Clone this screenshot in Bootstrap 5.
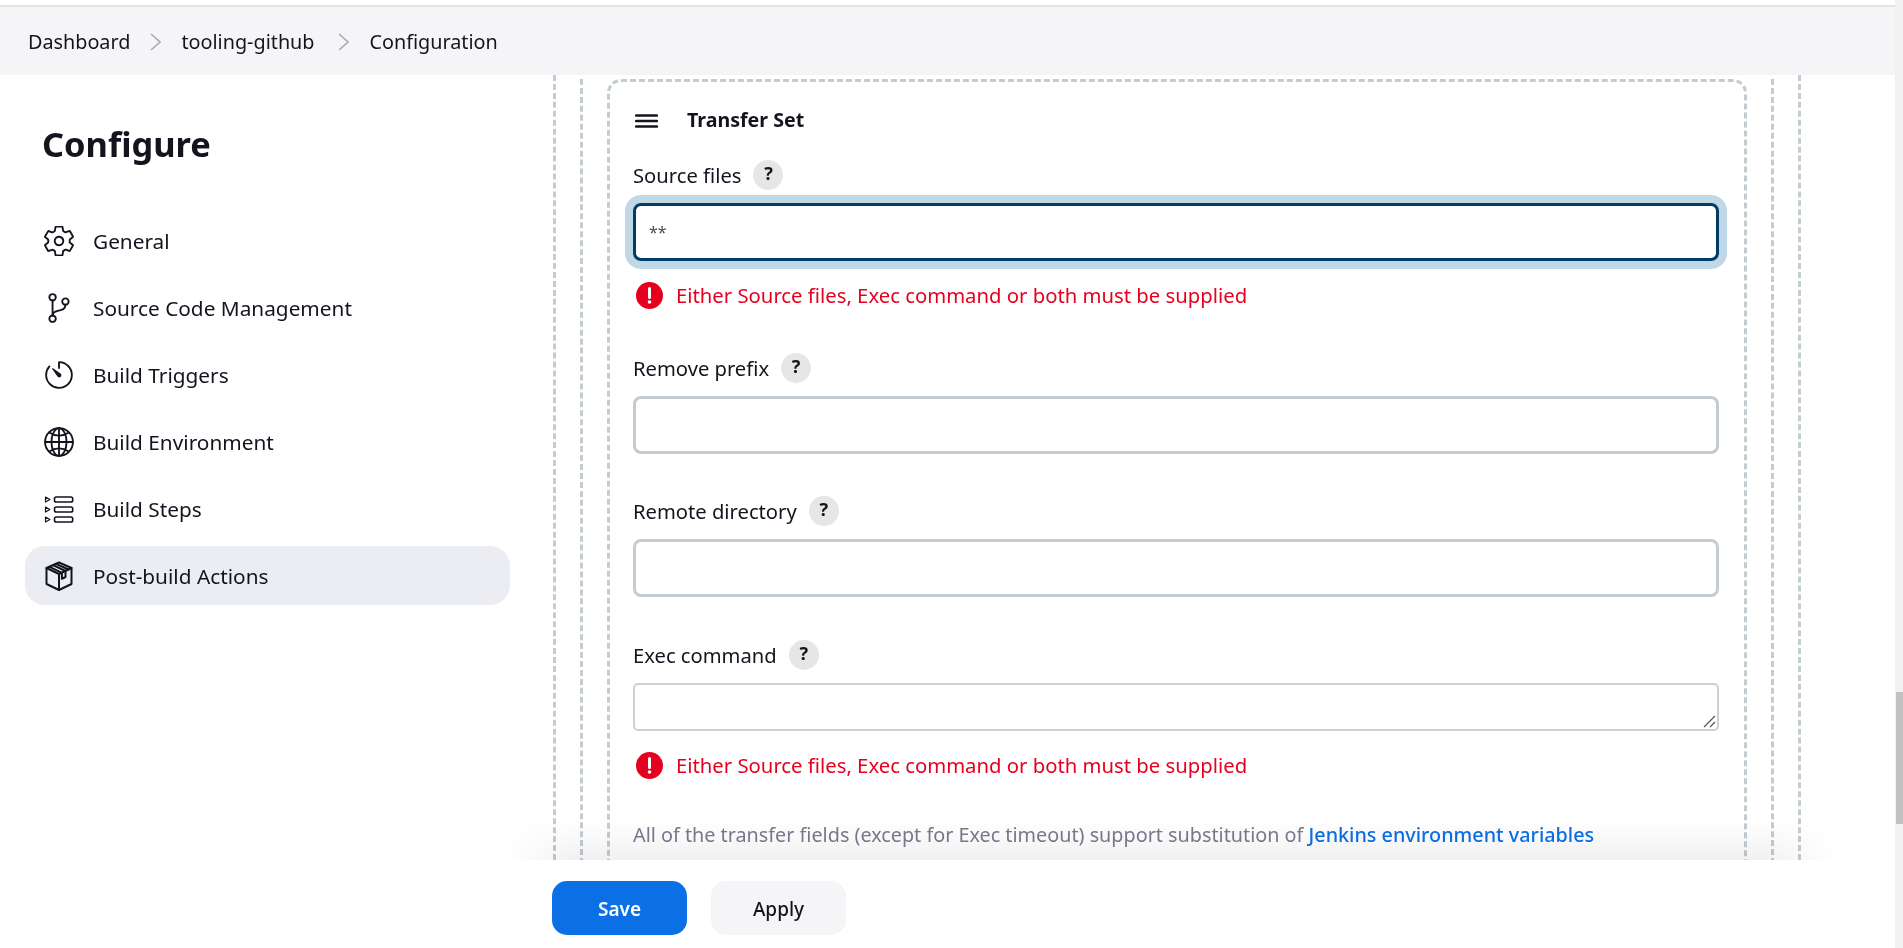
<!DOCTYPE html>
<html lang="en">
<head>
<meta charset="utf-8">
<title>Configuration</title>
<link rel="stylesheet" href="https://cdn.jsdelivr.net/npm/bootstrap@5.3.0/dist/css/bootstrap.min.css">
<style>
html,body{height:948px;overflow:hidden;background:#fff}
body{font-family:"Noto Sans","Open Sans","Liberation Sans",sans-serif;color:#14141f;font-size:20px}
.shell{height:948px}
.pagecol{width:1895px;flex:none}
.fake-scroll{width:8px;background:#f1f1f1;position:relative}
.fake-thumb{position:absolute;left:1px;right:0;top:692px;height:132px;background:#c1c1c1}
.top-strip{height:7px;border-bottom:2px solid #e4e4e0;flex:none}
.crumbs{height:68px;background:#f5f5f8;padding:2px 0 0 28px;flex:none;font-size:19.8px}
.crumbs a{color:#14141f;text-decoration:none}
.crumb-sep{width:11px;height:20px;margin:0 20px;flex:none}
.crumb-sep-b{margin:0 21px 0 23px}
.content{height:785px;overflow:hidden;flex:none}
.side{width:553px;flex:none;padding:0 0 0 25px}
.side-title{font-size:34.4px;font-weight:700;line-height:50px;margin:44px 0 42px 17px}
.side-link{height:59px;width:485px;margin-bottom:8px;padding-left:19px;border-radius:20px;color:#14141f;text-decoration:none;font-size:20.8px}
.side-link svg{width:30px;height:30px;margin-right:19px;flex:none}
.side-text{margin-top:2px}
.side-active{background:#ecedf3}
.rail{border-left:3px dashed #c3ccd1;border-right:3px dashed #c3ccd1;padding:0 24px}
.rail-outer{width:1248px}
.transfer{border:3px dashed #c3ccd1;border-radius:14px;margin-top:4px;padding:23px 25px 0 22px;height:900px}
.handle{width:23px;height:14px;margin:2px 29px 0 3px}
.transfer-title{font-weight:700;font-size:19.6px;line-height:28px;padding-top:1px}
.field-head{height:30px;margin-bottom:13px}
.field-first{margin-top:26px}
.field-label{line-height:30px;margin-bottom:0;font-size:20.2px}
.help-dot{width:30px;height:30px;border-radius:50%;background:#e6e6e6;font-weight:700;font-size:18px;margin-left:12px;line-height:26px;text-align:center}
.field-body{margin-left:1px}
.field-input.form-control{height:58px;border:3px solid #c3ccd1;border-radius:8px;padding:0 13px;font-size:16px;color:#4a4a55;box-shadow:none}
.field-input.is-focus{border-color:#003d66;box-shadow:0 0 0 8px #c0d8e6}
.field-next{margin-top:42px}
.field-exec{margin-top:43px}
.field-area-wrap{height:48px}
.field-area.form-control{height:48px;min-height:48px;border:2px solid #c9d0d6;border-radius:5px;resize:none;box-shadow:none}
.grip{position:absolute;right:3px;bottom:3px;width:13px;height:13px}
.err{color:#e6001f;line-height:27px;margin-top:21px;font-size:20.3px}
.err svg{width:27px;height:27px;margin:0 13px 0 3px;flex:none}
.err + .field-next{margin-top:44px}
.hint{color:#7a7a8e;line-height:30px;margin-top:41px;font-size:19.8px}
.hint a{color:#0b6fe6;text-decoration:none;font-weight:500}
.actionbar{height:88px;background:#fff;position:relative;padding:21px 0 0 552px;flex:none}
.actionbar::before{content:"";position:absolute;left:505px;right:60px;top:-40px;height:40px;background:linear-gradient(to bottom,#fff,#f1f1f3);mix-blend-mode:multiply;-webkit-mask-image:linear-gradient(to right,transparent,#000 70px,#000 calc(100% - 70px),transparent);mask-image:linear-gradient(to right,transparent,#000 70px,#000 calc(100% - 70px),transparent)}
.act-btn.btn{width:135px;height:54px;border-radius:15px;font-size:19px;border:0;margin-right:24px;padding-top:8px}
.act-save.btn{background:#0b6fe6;color:#fff;font-weight:600}
.act-apply.btn{background:#f5f5f8;color:#14141f;font-weight:500}
</style>
</head>
<body>
<div class="shell d-flex">
 <div class="pagecol d-flex flex-column">
  <div class="top-strip"></div>
  <nav class="crumbs d-flex align-items-center">
   <a href="#">Dashboard</a>
   <svg class="crumb-sep" viewBox="0 0 11 20" fill="none" stroke="#a9a9b6" stroke-width="1.6"><path d="M1 2l9 8-9 8"/></svg>
   <a href="#">tooling-github</a>
   <svg class="crumb-sep crumb-sep-b" viewBox="0 0 11 20" fill="none" stroke="#a9a9b6" stroke-width="1.6"><path d="M1 2l9 8-9 8"/></svg>
   <a href="#">Configuration</a>
  </nav>
  <div class="content d-flex">
   <aside class="side">
    <h1 class="side-title">Configure</h1>
    <a class="side-link d-flex align-items-center" href="#">
     <svg viewBox="32 32 448 448" fill="none" stroke="#14141f" stroke-width="28" stroke-linecap="round" stroke-linejoin="round"><path d="M262.29 192.31a64 64 0 1057.4 57.4 64.13 64.13 0 00-57.4-57.4zM416.39 256a154.34 154.34 0 01-1.53 20.79l45.21 35.46a10.81 10.81 0 012.45 13.75l-42.77 74a10.81 10.81 0 01-13.14 4.59l-44.9-18.08a16.11 16.11 0 00-15.17 1.75A164.48 164.48 0 01325 400.8a15.94 15.94 0 00-8.82 12.14l-6.73 47.89a11.08 11.08 0 01-10.68 9.17h-85.54a11.11 11.11 0 01-10.69-8.87l-6.72-47.82a16.07 16.07 0 00-9-12.22 155.3 155.3 0 01-21.46-12.57 16 16 0 00-15.11-1.71l-44.89 18.07a10.81 10.81 0 01-13.14-4.58l-42.77-74a10.8 10.8 0 012.45-13.75l38.21-30a16.05 16.05 0 006-14.08c-.36-4.17-.58-8.33-.58-12.5s.21-8.27.58-12.35a16 16 0 00-6.07-13.94l-38.19-30A10.81 10.81 0 0149.48 186l42.77-74a10.81 10.81 0 0113.14-4.59l44.9 18.08a16.11 16.11 0 0015.17-1.75A164.48 164.48 0 01187 111.2a15.94 15.94 0 008.82-12.14l6.73-47.89A11.08 11.08 0 01213.23 42h85.54a11.11 11.11 0 0110.69 8.87l6.72 47.82a16.07 16.07 0 009 12.22 155.3 155.3 0 0121.46 12.57 16 16 0 0015.11 1.71l44.89-18.07a10.81 10.81 0 0113.14 4.58l42.77 74a10.8 10.8 0 01-2.45 13.75l-38.21 30a16.05 16.05 0 00-6.05 14.08c.33 4.14.55 8.3.55 12.47z"/></svg>
     <span class="side-text">General</span></a>
    <a class="side-link d-flex align-items-center" href="#">
     <svg viewBox="32 32 448 448" fill="none" stroke="#14141f" stroke-width="28" stroke-linecap="round" stroke-linejoin="round"><circle cx="160" cy="96" r="48"/><circle cx="160" cy="416" r="48"/><path d="M160 368V144"/><circle cx="352" cy="160" r="48"/><path d="M352 208c0 128-192 48-192 160"/></svg>
     <span class="side-text">Source Code Management</span></a>
    <a class="side-link d-flex align-items-center" href="#">
     <svg viewBox="32 32 448 448" fill="none" stroke="#14141f" stroke-width="28" stroke-linecap="round" stroke-linejoin="round"><path d="M112.91 128A191.85 191.85 0 0064 254c-1.18 106.35 85.65 193.8 192 194 106.2.2 192-85.83 192-192 0-104.54-83.55-189.61-187.5-192a4.36 4.36 0 00-4.5 4.37V152"/><path fill="#14141f" stroke="none" d="M233.38 278.63l-79-113a8.13 8.13 0 0111.32-11.32l113 79a32.5 32.5 0 01-37 53.37 33.21 33.21 0 01-7.32-8.05z"/></svg>
     <span class="side-text">Build Triggers</span></a>
    <a class="side-link d-flex align-items-center" href="#">
     <svg viewBox="32 32 448 448" fill="none" stroke="#14141f" stroke-width="28" stroke-linecap="round" stroke-linejoin="round"><path d="M256 48C141.13 48 48 141.13 48 256s93.13 208 208 208 208-93.13 208-208S370.87 48 256 48z"/><path d="M256 48c-58.07 0-112.67 93.13-112.67 208S197.93 464 256 464s112.67-93.13 112.67-208S314.07 48 256 48z"/><path d="M256 48v416M464 256H48"/><path d="M117.33 117.33c38.24 27.15 86.38 43.34 138.67 43.34s100.43-16.19 138.67-43.34"/><path d="M394.67 394.67c-38.24-27.15-86.38-43.34-138.67-43.34s-100.43 16.19-138.67 43.34"/></svg>
     <span class="side-text">Build Environment</span></a>
    <a class="side-link d-flex align-items-center" href="#">
     <svg viewBox="0 0 29 30" fill="none" stroke="#14141f" stroke-width="1.6" stroke-linejoin="round"><rect x="10" y="3" width="18.2" height="5" rx="1.8"/><rect x="10" y="13" width="18.2" height="5" rx="1.8"/><rect x="10" y="23" width="18.2" height="5" rx="1.8"/><path stroke-width="1.2" d="M1 3l4.4 2.5L1 8zM1 13l4.4 2.5L1 18zM1 23l4.4 2.5L1 28z"/></svg>
     <span class="side-text">Build Steps</span></a>
    <a class="side-link side-active d-flex align-items-center" href="#">
     <svg viewBox="0 0 29 30" fill="none" stroke="#14141f" stroke-width="2" stroke-linejoin="round" stroke-linecap="round"><path d="M14.5 1.5L27 7v16l-12.5 6L2 23V7z"/><path d="M2 7l12.5 6L27 7M14.5 13v16"/><path d="M8.5 4.2L21 10v6l-3.6 1.8v-6L5.2 5.8M11.5 2.8L24 8.5"/></svg>
     <span class="side-text">Post-build Actions</span></a>
   </aside>
   <div class="rail rail-outer flex-none">
    <div class="rail h-100">
     <div class="transfer">
      <div class="d-flex align-items-center">
       <svg class="handle" viewBox="0 0 23 14" fill="none" stroke="#14141f" stroke-width="2.4" stroke-linecap="round"><path d="M1 1.5h21M1 7h21M1 12.5h21"/></svg>
       <div class="transfer-title">Transfer Set</div>
      </div>
      <div class="field-body">
      <div class="field-head field-first d-flex align-items-center">
       <label class="field-label">Source files</label><span class="help-dot">?</span>
      </div>
      <input class="form-control field-input is-focus" value="**">
      <div class="err d-flex align-items-center">
       <svg viewBox="0 0 27 27"><circle cx="13.5" cy="13.5" r="13.5" fill="#e6001f"/><path d="M13.5 6.5v9" stroke="#fff" stroke-width="3" stroke-linecap="round"/><circle cx="13.5" cy="20" r="1.8" fill="#fff"/></svg>
       Either Source files, Exec command or both must be supplied
      </div>
      <div class="field-head field-next d-flex align-items-center">
       <label class="field-label">Remove prefix</label><span class="help-dot">?</span>
      </div>
      <input class="form-control field-input" value="">
      <div class="field-head field-next d-flex align-items-center">
       <label class="field-label">Remote directory</label><span class="help-dot">?</span>
      </div>
      <input class="form-control field-input" value="">
      <div class="field-head field-exec d-flex align-items-center">
       <label class="field-label">Exec command</label><span class="help-dot">?</span>
      </div>
      <div class="field-area-wrap position-relative">
       <textarea class="form-control field-area"></textarea>
       <svg class="grip" viewBox="0 0 13 13" fill="none" stroke="#555" stroke-width="1.2"><path d="M1 12L12 1M7 12l5-5"/></svg>
      </div>
      <div class="err d-flex align-items-center">
       <svg viewBox="0 0 27 27"><circle cx="13.5" cy="13.5" r="13.5" fill="#e6001f"/><path d="M13.5 6.5v9" stroke="#fff" stroke-width="3" stroke-linecap="round"/><circle cx="13.5" cy="20" r="1.8" fill="#fff"/></svg>
       Either Source files, Exec command or both must be supplied
      </div>
      <div class="hint">All of the transfer fields (except for Exec timeout) support substitution of <a href="#">Jenkins environment variables</a></div>
      </div>
     </div>
    </div>
   </div>
  </div>
  <div class="actionbar d-flex align-items-start">
   <button class="btn act-btn act-save">Save</button>
   <button class="btn act-btn act-apply">Apply</button>
  </div>
 </div>
 <div class="fake-scroll"><div class="fake-thumb"></div></div>
</div>
</body>
</html>
